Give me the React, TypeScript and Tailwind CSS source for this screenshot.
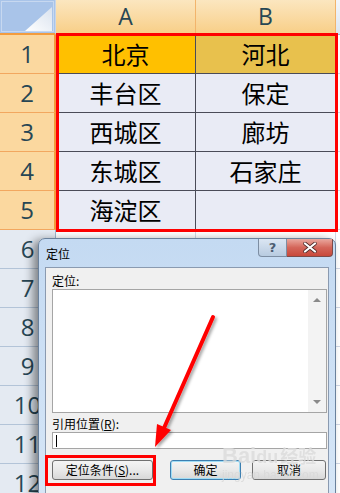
import React from "react";

const cells: string[][] = [
  ["北京", "河北"],
  ["丰台区", "保定"],
  ["西城区", "廊坊"],
  ["东城区", "石家庄"],
  ["海淀区", ""],
];

const font = "font-['Noto_Sans_CJK_SC','Noto_Sans',sans-serif]";

function Sheet() {
  const rows = Array.from({ length: 12 }, (_, i) => i + 1);
  return (
    <div className="grid grid-cols-[56px_140px_140px_1fr] grid-rows-[35px_repeat(12,39px)]">
      {/* corner */}
      <div className="relative border-r border-b-2 border-r-[#c9d6e8] border-b-[#f39c3d] bg-[#a9c4e9]">
        <svg className="absolute inset-0" width="56" height="33" viewBox="0 0 56 33">
          <defs>
            <linearGradient id="tri" x1="0" y1="1" x2="1" y2="0">
              <stop offset="0" stopColor="#ffffff" />
              <stop offset="1" stopColor="#d9e2ee" />
            </linearGradient>
          </defs>
          <rect x="1.5" y="1.5" width="52" height="30" fill="none" stroke="#c7d8f0" />
          <polygon points="25,31 52,31 52,7" fill="url(#tri)" />
        </svg>
      </div>
      {/* column headers */}
      {["A", "B"].map((c) => (
        <div
          key={c}
          className="flex items-center justify-center border-r border-b-2 border-r-[#f2b46b] border-b-[#f39c3d] bg-gradient-to-b from-[#fbe6bf] to-[#f8cf88] text-[23px] text-[#274654] font-['Open_Sans',sans-serif]"
        >
          {c}
        </div>
      ))}
      <div className="border-b border-[#9eb6ce] bg-gradient-to-b from-[#f4f7fb] to-[#dde6f0]" />

      {rows.map((r) => {
        const sel = r <= 5;
        const data = sel ? cells[r - 1] : ["", ""];
        return (
          <React.Fragment key={r}>
            <div
              className={
                "flex items-center justify-center text-[24px] text-[#274654] font-['Open_Sans',sans-serif] " +
                (sel
                  ? "bg-[#fbd89f] border-b border-r-2 border-b-[#f2a75f] border-r-[#f39c3d]"
                  : "bg-[#e4eaf2] border-b border-r border-b-[#b3c4d8] border-r-[#9eb6ce]")
              }
            >
              {r}
            </div>
            {data.map((t, j) => (
              <div
                key={j}
                className={
                  "flex items-center justify-center text-[24px] text-black " +
                  font +
                  " " +
                  (sel
                    ? "border-r border-b border-[#4a4b57] " +
                      (r === 1
                        ? j === 0
                          ? "bg-[#ffc000]"
                          : "bg-[#e8c14d]"
                        : "bg-[#e9ebf5]")
                    : "border-r border-b border-[#d0d7e5] bg-white")
                }
              >
                {t}
              </div>
            ))}
            <div className="border-b border-[#d0d7e5] bg-white" />
          </React.Fragment>
        );
      })}
    </div>
  );
}

function WinButton({
  label,
  w,
  focused,
}: {
  label: React.ReactNode;
  w: string;
  focused?: boolean;
}) {
  return (
    <div
      className={
        "h-[20px] rounded-[3px] border flex items-center justify-center text-[12px] text-black bg-gradient-to-b from-[#f4f4f4] via-[#e9e9e9] to-[#d8d8d8] " +
        w +
        " " +
        (focused ? "border-[#3c7fb1] shadow-[inset_0_0_0_1px_#9fdcf5]" : "border-[#707070]")
      }
    >
      {label}
    </div>
  );
}

function Dialog() {
  return (
    <div
      className={
        "absolute left-[38px] top-[238px] w-[298px] h-[262px] rounded-t-[7px] border border-[#6a819c] bg-gradient-to-b from-[#c4daf2] to-[#d6e6f7] shadow-[-5px_2px_10px_rgba(0,0,0,0.45)] flex flex-col " +
        font
      }
    >
      {/* title bar */}
      <div className="h-[28px] flex">
        <div className="pl-[7px] pt-[7px] text-[12px] leading-[16px] text-black">定位</div>
        <div className="ml-auto mr-[2px] flex h-[18px]">
          <div className="w-[29px] rounded-bl-[4px] border border-t-0 border-[#7d8ea3] bg-gradient-to-b from-[#dbe6f3] to-[#b8cbe0] flex items-center justify-center text-[13px] font-bold text-[#4c5d72] font-['DejaVu_Sans',sans-serif]">
            ?
          </div>
          <div className="w-[46px] rounded-br-[4px] border border-l-0 border-t-0 border-[#7d4a48] bg-gradient-to-b from-[#e9a89f] via-[#d4665a] to-[#c8483a] flex items-center justify-center">
            <svg width="14" height="11" viewBox="0 0 14 11">
              <path d="M2 1.5 L12 9.5 M12 1.5 L2 9.5" stroke="#4d2a28" strokeWidth="3.6" strokeLinecap="round" />
              <path d="M2 1.5 L12 9.5 M12 1.5 L2 9.5" stroke="#ffffff" strokeWidth="2.2" strokeLinecap="round" />
            </svg>
          </div>
        </div>
      </div>

      {/* client */}
      <div className="mx-[6px] flex-1 bg-[#f0f0f0] border border-[#8a9ab0] pl-[6px] pr-[1px] pt-[5px] flex flex-col">
        <div className="text-[12px] leading-[16px] text-black">定位:</div>
        <div className="h-[124px] border border-[#a5a5a5] bg-white flex justify-end">
          <div className="w-[18px] bg-[#f3f3f3] flex flex-col items-center justify-between py-[8px]">
            <svg width="8" height="4" viewBox="0 0 8 4">
              <polygon points="0,4 8,4 4,0" fill="#8a8a8a" />
            </svg>
            <svg width="8" height="4" viewBox="0 0 8 4">
              <polygon points="0,0 8,0 4,4" fill="#8a8a8a" />
            </svg>
          </div>
        </div>
        <div className="mt-[3px] text-[12px] leading-[16px] text-black">
          引用位置(<span className="underline">R</span>):
        </div>
        <div className="h-[17px] border border-[#a5a5a5] bg-white flex items-center pl-[3px]">
          <div className="w-[1px] h-[12px] bg-black" />
        </div>
        <div className="mt-[11px] flex">
          <WinButton label={<span>定位条件(<span className="underline">S</span>)...</span>} w="w-[101px]" />
          <WinButton label="确定" w="w-[71px] ml-[17px]" focused />
          <WinButton label="取消" w="w-[74px] ml-[11px]" />
        </div>
      </div>
    </div>
  );
}

export default function App() {
  return (
    <div className="relative w-[340px] h-[493px] overflow-hidden bg-white">
      <Sheet />

      {/* selection outline */}
      <div className="absolute left-[56px] top-[33px] w-[282px] h-[199px] border-[3px] border-[#ff0000]" />

      <Dialog />

      {/* watermark */}
      <div className="absolute left-[222px] top-[444px] text-[22px] font-bold leading-[22px] text-[#dcdcdc] opacity-80 font-['Liberation_Sans',sans-serif]">
        Bai<span className="text-[18px]">du</span>
        <span className="ml-[2px] text-[18px] font-['Noto_Sans_CJK_SC',sans-serif]">经验</span>
      </div>
      <div className="absolute left-[222px] top-[468px] text-[12px] leading-[14px] text-[#d8d8d8] opacity-80 font-['Liberation_Sans',sans-serif]">
        jingyan.baidu.com
      </div>

      {/* highlight around button */}
      <div className="absolute left-[45px] top-[455px] w-[111px] h-[31px] border-[3px] border-[#ff0000]" />

      {/* red arrow */}
      <svg className="absolute inset-0 pointer-events-none" width="340" height="493" viewBox="0 0 340 493">
        <defs>
          <filter id="sh" x="-20%" y="-20%" width="140%" height="140%">
            <feDropShadow dx="2" dy="2" stdDeviation="1.5" floodColor="#000" floodOpacity="0.35" />
          </filter>
        </defs>
        <g filter="url(#sh)">
          <line x1="213" y1="317" x2="164" y2="428" stroke="#ff0000" strokeWidth="4" strokeLinecap="round" />
          <polygon points="155,447 157,424 171,430" fill="#ff0000" />
        </g>
      </svg>
    </div>
  );
}
